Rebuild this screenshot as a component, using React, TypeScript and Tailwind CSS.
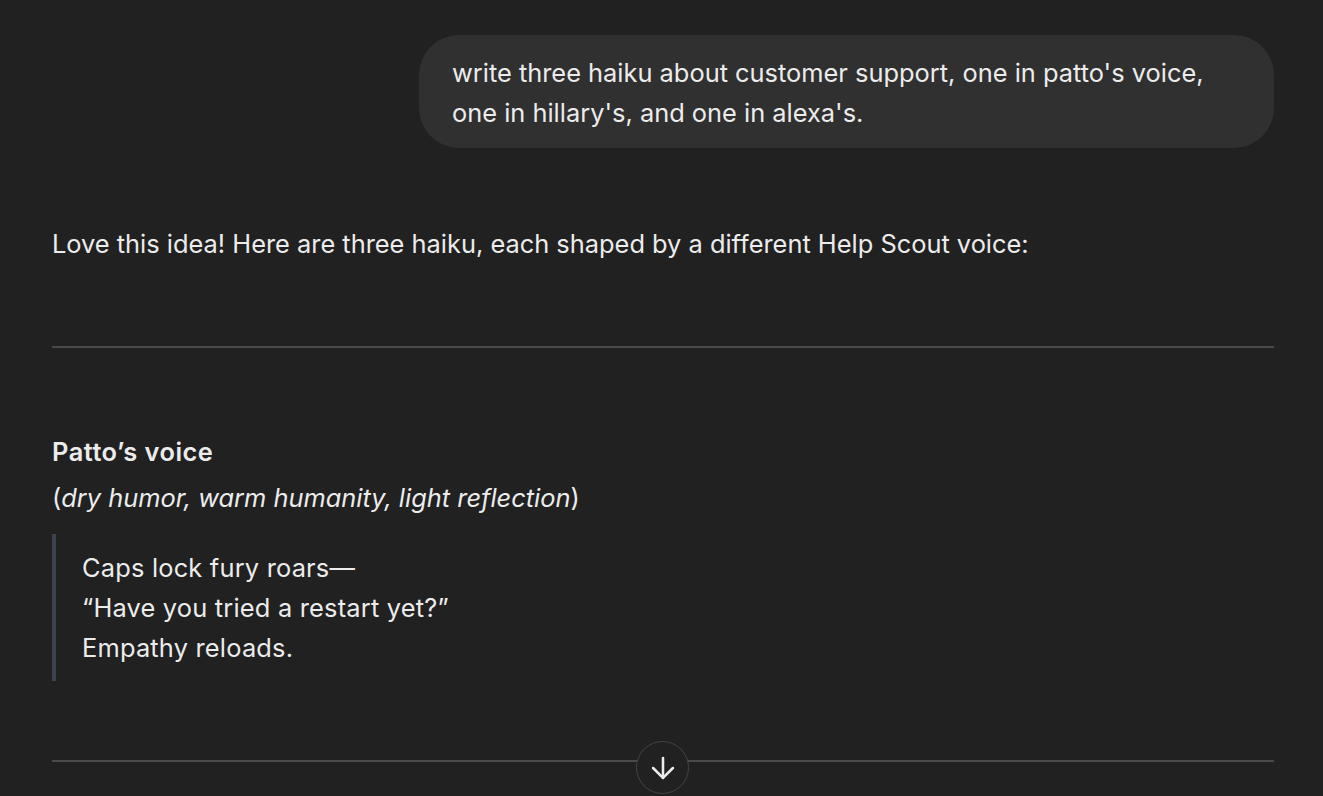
import { ArrowDown } from "lucide-react"

export default function App() {
  return (
    <div
      className="relative h-[796px] w-full overflow-hidden bg-[#212121] text-[#ececec]"
      style={{ fontFamily: "Inter, 'Noto Sans', sans-serif" }}
    >
      <div className="ml-[52px] w-[1222px] pt-[35px]">
        <div className="flex justify-end">
          <div className="w-[855px] rounded-[40px] bg-[#303030] px-[33px] pb-[15px] pt-[18px] text-[25.4px] leading-[40px]">
            write three haiku about customer support, one in patto's voice,
            one in hillary's, and one in alexa's.
          </div>
        </div>

        <p className="mt-[76px] text-[25.4px] leading-[40px]">
          Love this idea! Here are three haiku, each shaped by a different Help
          Scout voice:
        </p>

        <hr className="mt-[82px] border-t-2 border-[#4a4a4a]" />

        <h3 className="mt-[84px] text-[25.4px] font-semibold leading-[40px] tracking-[0.5px]">
          Patto’s voice
        </h3>
        <p className="mt-[6px] text-[25.4px] leading-[40px]">
          (<em>dry humor, warm humanity, light reflection</em>)
        </p>

        <blockquote className="mt-[16px] border-l-4 border-[#3d4250] pb-[13px] pl-[26px] pt-[14px] text-[25.4px] leading-[40px] tracking-[0.2px]">
          <div>Caps lock fury roars—</div>
          <div>“Have you tried a restart yet?”</div>
          <div>Empathy reloads.</div>
        </blockquote>

        <hr className="mt-[79px] border-t-2 border-[#4a4a4a]" />
      </div>

      <button
        type="button"
        className="absolute left-[636px] top-[741px] flex h-[53px] w-[53px] items-center justify-center rounded-full border border-[#444] bg-[#212121] text-[#ececec]"
      >
        <ArrowDown size={34} strokeWidth={1.8} />
      </button>
    </div>
  )
}
